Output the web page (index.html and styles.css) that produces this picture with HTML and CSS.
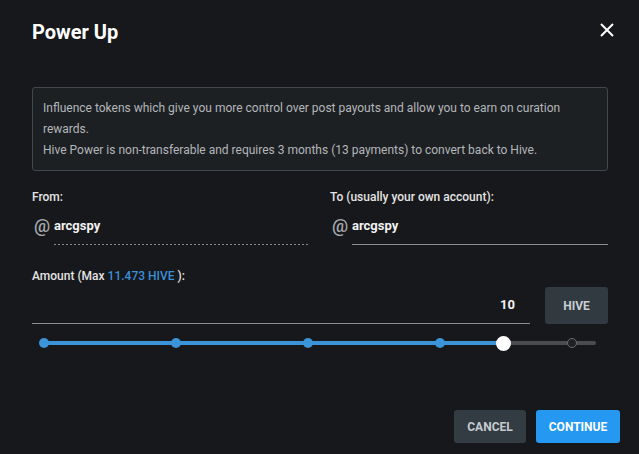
FILE: index.html
```html
<!DOCTYPE html>
<html lang="en">
<head>
<meta charset="utf-8">
<title>Power Up</title>
<link rel="stylesheet" href="styles.css">
</head>
<body>
<div class="dialog">
  <header class="head">
    <h1 class="title">Power Up</h1>
    <button class="close" aria-label="Close">
      <svg width="14" height="14" viewBox="0 0 14 14"><path d="M1 1L13 13M13 1L1 13" stroke="#fff" stroke-width="2" fill="none"/></svg>
    </button>
  </header>

  <div class="info">
    Influence tokens which give you more control over post payouts and allow you to earn on curation rewards.<br>
    Hive Power is non-transferable and requires 3 months (13 payments) to convert back to Hive.
  </div>

  <div class="accounts">
    <div class="field">
      <div class="label">From:</div>
      <div class="acc-row">
        <span class="at">@</span>
        <div class="acc-input dashed">arcgspy</div>
      </div>
    </div>
    <div class="field">
      <div class="label">To (usually your own account):</div>
      <div class="acc-row">
        <span class="at">@</span>
        <div class="acc-input solid">arcgspy</div>
      </div>
    </div>
  </div>

  <div class="label amount-label">Amount (Max <span class="blue">11.473 HIVE</span> ):</div>
  <div class="amount-row">
    <div class="amount-input">10</div>
    <button class="hive">HIVE</button>
  </div>

  <div class="slider">
    <div class="track"></div>
    <div class="fill" style="width:83.333%"></div>
    <span class="mark on" style="left:0%"></span>
    <span class="mark on" style="left:23.913%"></span>
    <span class="mark on" style="left:47.826%"></span>
    <span class="mark on" style="left:71.739%"></span>
    <span class="mark off" style="left:95.652%"></span>
    <span class="thumb" style="left:83.333%"></span>
  </div>

  <div class="actions">
    <button class="btn cancel">CANCEL</button>
    <button class="btn continue">CONTINUE</button>
  </div>
</div>
</body>
</html>
```

FILE: styles.css
```css
html, body {
  margin: 0;
  padding: 0;
  background: #17181b;
}
body {
  font-family: Roboto, "Liberation Sans", sans-serif;
  color: #e6e6e6;
  width: 639px;
  height: 454px;
  overflow: hidden;
}
.dialog {
  width: 576px;
  padding: 20px 31px 0 32px;
  display: flex;
  flex-direction: column;
}
.head {
  display: flex;
  justify-content: space-between;
  align-items: flex-start;
  height: 24px;
}
.title {
  margin: 0;
  font-size: 20px;
  line-height: 24px;
  font-weight: 700;
  color: #fff;
}
.close {
  background: none;
  border: 0;
  padding: 0;
  margin: 3px -6px 0 0;
  width: 14px;
  height: 14px;
  display: flex;
}
.info {
  margin-top: 43px;
  border: 1px solid #41474d;
  border-radius: 3px;
  background: #1d2023;
  padding: 10px 11px 9px 10px;
  font-size: 12px;
  line-height: 21px;
  color: #b3b6ba;
}
.accounts {
  margin-top: 18px;
  display: grid;
  grid-template-columns: 1fr 1fr;
  column-gap: 20px;
}
.label {
  font-size: 12px;
  line-height: 16px;
  font-weight: 500;
  color: #e4e4e4;
}
.acc-row {
  margin-top: 5px;
  display: flex;
  align-items: stretch;
}
.at {
  width: 22px;
  flex: none;
  font-size: 18px;
  font-weight: 500;
  line-height: 32px;
  color: #a6a9ad;
  padding-left: 2px;
  box-sizing: border-box;
}
.acc-input {
  flex: 1;
  font-size: 13px;
  font-weight: 700;
  color: #f2f2f2;
  line-height: 20px;
  padding: 6px 0 8px;
}
.acc-input.dashed {
  background-image: repeating-linear-gradient(to right, #8a8a8a 0, #8a8a8a 2px, transparent 2px, transparent 4px);
  background-size: 100% 1px;
  background-position: left bottom;
  background-repeat: no-repeat;
  padding-bottom: 9px;
}
.acc-input.solid {
  border-bottom: 1px solid #8c8c8c;
}
.amount-label {
  margin-top: 23px;
}
.blue {
  color: #3a8fd9;
}
.amount-row {
  margin-top: 3px;
  display: flex;
  align-items: flex-end;
  gap: 15px;
}
.amount-input {
  flex: 1;
  text-align: right;
  font-size: 13px;
  font-weight: 700;
  line-height: 20px;
  color: #f2f2f2;
  padding: 0 15px 8px 0;
  border-bottom: 1px solid #8c8c8c;
}
.hive {
  width: 63px;
  height: 37px;
  border: 0;
  border-radius: 3px;
  background: #313a40;
  color: #c9ced3;
  font-family: inherit;
  font-size: 12px;
  font-weight: 700;
  padding: 0;
}
.slider {
  position: relative;
  margin: 9px 0 0 12px;
  width: 552px;
  height: 20px;
}
.track {
  position: absolute;
  left: 0;
  right: 0;
  top: 8px;
  height: 4px;
  border-radius: 2px;
  background: #4a4c4f;
}
.fill {
  position: absolute;
  left: 0;
  top: 8px;
  height: 4px;
  background: #3a94d7;
}
.mark {
  position: absolute;
  top: 5px;
  width: 10px;
  height: 10px;
  margin-left: -5px;
  border-radius: 50%;
  box-sizing: border-box;
}
.mark.on {
  background: #3a94d7;
}
.mark.off {
  background: #1e2022;
  border: 1px solid #6a6c6f;
}
.thumb {
  position: absolute;
  top: 3px;
  width: 15px;
  height: 15px;
  margin-left: -7.5px;
  border-radius: 50%;
  background: #fff;
}
.actions {
  margin: 57px -12px 0 0;
  display: flex;
  justify-content: flex-end;
  gap: 10px;
}
.btn {
  height: 33px;
  border: 0;
  border-radius: 3px;
  font-family: inherit;
  font-size: 12px;
  font-weight: 700;
  padding: 0;
}
.cancel {
  width: 72px;
  background: #333c43;
  color: #c6cbd0;
}
.continue {
  width: 84px;
  background: #2598f1;
  color: #fff;
}
```
